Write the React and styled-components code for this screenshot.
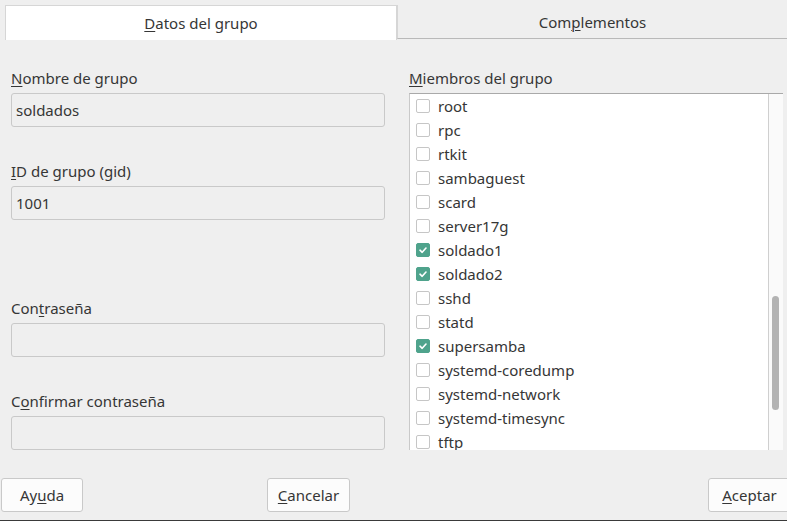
import React from "react";
import styled, { createGlobalStyle } from "styled-components";

const Global = createGlobalStyle`
  html, body { margin: 0; padding: 0; background: #efefef; }
  body { font-family: "Noto Sans", "DejaVu Sans", sans-serif; font-size: 15px; color: #363636; }
  * { box-sizing: border-box; }
`;

const Window = styled.div`
  width: 787px;
  height: 521px;
  background: #efefef;
  border-bottom: 1px solid #3a3a3a;
  display: flex;
  flex-direction: column;
  overflow: hidden;
`;

const TabBar = styled.div`
  display: flex;
  padding: 5px 0 0 5px;
  height: 40px;
`;

const Tab = styled.div`
  height: 35px;
  display: flex;
  align-items: center;
  justify-content: center;
  padding-bottom: 1px;
  ${(p) =>
    p.$active
      ? `width: 392px; background: #ffffff; border: 1px solid #d6d6d6; border-bottom: none;`
      : `flex: 1; border-left: 1px solid #d6d6d6; border-bottom: 1px solid #b9b9b9; height: 34px; padding-bottom: 0;`}
`;

const Mn = styled.span`
  text-decoration: underline;
  text-underline-offset: 2px;
  text-decoration-thickness: 1px;
`;

const Body = styled.div`
  display: flex;
  gap: 24px;
  padding: 0 0 0 11px;
`;

const LeftCol = styled.div`
  width: 374px;
  display: flex;
  flex-direction: column;
`;

const Field = styled.div`
  display: flex;
  flex-direction: column;
  gap: 5px;
  margin-top: ${(p) => p.$top}px;
`;

const Label = styled.div`
  height: 20px;
  line-height: 20px;
`;

const Input = styled.div`
  height: 34px;
  border: 1px solid #c9c9c9;
  border-radius: 3px;
  background: #efefef;
  padding: 0 4px;
  display: flex;
  align-items: center;
`;

const RightCol = styled.div`
  width: 374px;
  display: flex;
  flex-direction: column;
  gap: 5px;
  margin-top: 28px;
`;

const ListBox = styled.div`
  height: 357px;
  display: flex;
  background: #ffffff;
  border-top: 1px solid #a9a9a9;
  border-left: 1px solid #c9c9c9;
  overflow: hidden;
`;

const List = styled.div`
  flex: 1;
  border-right: 1px solid #cfcfcf;
`;

const Row = styled.div`
  height: 24px;
  display: flex;
  align-items: center;
  gap: 8px;
  padding-left: 6px;
`;

const Check = styled.span`
  width: 14px;
  height: 14px;
  border-radius: 2px;
  border: 1px solid ${(p) => (p.$on ? "#4fa38c" : "#c6c6c6")};
  background: ${(p) => (p.$on ? "#4fa38c" : "#ffffff")};
  display: flex;
  align-items: center;
  justify-content: center;
`;

const ScrollTrack = styled.div`
  width: 14px;
  background: #fafafa;
  padding: 202px 0 0 3px;
`;

const Thumb = styled.div`
  width: 7px;
  height: 114px;
  border-radius: 4px;
  background: #b3b3b3;
`;

const Footer = styled.div`
  margin-top: auto;
  display: flex;
  align-items: center;
  padding: 0 0 8px 1px;
`;

const Button = styled.div`
  height: 34px;
  width: ${(p) => p.$w}px;
  margin-left: ${(p) => p.$ml || "0"};
  margin-right: ${(p) => p.$mr || "0"};
  background: #fcfcfc;
  border: 1px solid #c9c9c9;
  border-radius: 3px;
  display: flex;
  align-items: center;
  justify-content: center;
  flex-shrink: 0;
`;

const members = [
  ["root", false],
  ["rpc", false],
  ["rtkit", false],
  ["sambaguest", false],
  ["scard", false],
  ["server17g", false],
  ["soldado1", true],
  ["soldado2", true],
  ["sshd", false],
  ["statd", false],
  ["supersamba", true],
  ["systemd-coredump", false],
  ["systemd-network", false],
  ["systemd-timesync", false],
  ["tftp", false],
];

const Tick = () => (
  <svg width="10" height="10" viewBox="0 0 10 10">
    <path d="M2 5.2 L4.2 7.3 L8 3" fill="none" stroke="#fff" strokeWidth="1.6" strokeLinecap="round" strokeLinejoin="round" />
  </svg>
);

export default function App() {
  return (
    <Window>
      <Global />
      <TabBar>
        <Tab $active>
          <span><Mn>D</Mn>atos del grupo</span>
        </Tab>
        <Tab>
          <span>Com<Mn>p</Mn>lementos</span>
        </Tab>
      </TabBar>
      <Body>
        <LeftCol>
          <Field $top={28}>
            <Label><Mn>N</Mn>ombre de grupo</Label>
            <Input>soldados</Input>
          </Field>
          <Field $top={34}>
            <Label><Mn>I</Mn>D de grupo (gid)</Label>
            <Input>1001</Input>
          </Field>
          <Field $top={78}>
            <Label>Con<Mn>t</Mn>raseña</Label>
            <Input />
          </Field>
          <Field $top={34}>
            <Label>C<Mn>o</Mn>nfirmar contraseña</Label>
            <Input />
          </Field>
        </LeftCol>
        <RightCol>
          <Label><Mn>M</Mn>iembros del grupo</Label>
          <ListBox>
            <List>
              {members.map(([name, on]) => (
                <Row key={name}>
                  <Check $on={on}>{on && <Tick />}</Check>
                  <span>{name}</span>
                </Row>
              ))}
            </List>
            <ScrollTrack>
              <Thumb />
            </ScrollTrack>
          </ListBox>
        </RightCol>
      </Body>
      <Footer>
        <Button $w={82}>Ay<Mn>u</Mn>da</Button>
        <Button $w={83} $ml="184px">
          <span><Mn>C</Mn>ancelar</span>
        </Button>
        <Button $w={83} $ml="auto" $mr="-4px">
          <span><Mn>A</Mn>ceptar</span>
        </Button>
      </Footer>
    </Window>
  );
}
